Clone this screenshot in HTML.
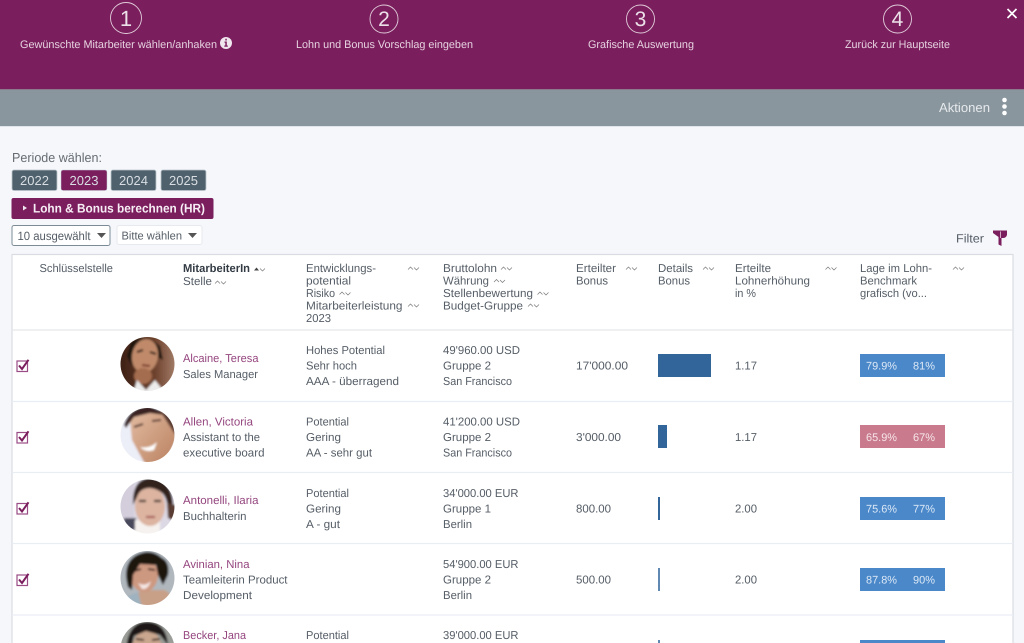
<!DOCTYPE html>
<html><head><meta charset="utf-8"><title>Lohn und Bonus</title>
<style>
html,body{margin:0;padding:0;background:#f5f7fb;width:1024px;height:643px;overflow:hidden}
svg{display:block;overflow:visible;filter:blur(.3px);font-family:"Liberation Sans",sans-serif}
text{font-size:11.5px;fill:#555d66;text-rendering:geometricPrecision}
.w{fill:#e6d3e0;font-size:11px}
.n{fill:#94457e}
.b{fill:#dce8f5;font-size:11px}
.s{fill:none;stroke:#777;stroke-width:.7}
.num{fill:#ece0e8;font-size:21px;text-anchor:middle}
.c{fill:none;stroke:#e0ccd9;stroke-width:.9}
.y{fill:#d8dee3;font-size:13px;text-anchor:middle}
.l{stroke:#e9eef5;stroke-width:1.2}
</style></head><body>
<svg width="1024" height="643" viewBox="0 0 1024 643" xmlns="http://www.w3.org/2000/svg">
<defs>
<filter id="bl" x="-20%" y="-20%" width="140%" height="140%"><feGaussianBlur stdDeviation="1.1"/></filter>
<clipPath id="cp1"><circle cx="147.5" cy="364" r="27"/></clipPath>
<clipPath id="cp2"><circle cx="147.5" cy="435" r="27"/></clipPath>
<clipPath id="cp3"><circle cx="147.5" cy="506.500" r="27"/></clipPath>
<clipPath id="cp4"><circle cx="147.5" cy="578" r="27"/></clipPath>
<clipPath id="cp5"><circle cx="147.5" cy="649" r="27"/></clipPath>
<linearGradient id="g1" x1="0" x2="1"><stop offset="0" stop-color="#3a1e14"/><stop offset=".6" stop-color="#6b3f2a"/><stop offset="1" stop-color="#a98470"/></linearGradient>
<linearGradient id="sk2" x1="0" x2="1" y1="0" y2="1"><stop offset="0" stop-color="#e3bca2"/><stop offset="1" stop-color="#b9805f"/></linearGradient>
<g id="ck"><rect x="1" y="2" width="10.500" height="10.500" fill="none" stroke="#9a4c85" stroke-width="1.200"/><path d="M3 6.500L6 10L12.500 .8" fill="none" stroke="#7b1e5e" stroke-width="2"/></g>
<g id="so"><path class="s" d="M0 3.500L2.500 1L5 3.500M6 1.500L8.500 4L11 1.500"/></g>
<path id="car" d="M0 0H9L4.500 5Z" fill="#555"/>
</defs>

<!-- header -->
<rect x="-5" y="-5" width="1034" height="94.500" fill="#7b1e5e"/>
<rect x="-5" y="89.500" width="1034" height="37" fill="#8a969e"/>
<rect x="-5" y="89" width="1034" height="1" fill="#8c7a8e"/>
<rect x="-5" y="126" width="1034" height="1" fill="#dfe5ea"/>
<rect x="-5" y="127" width="1034" height="525" fill="#f5f7fb"/>

<circle class="c" cx="126" cy="18" r="15.500"/><text class="num" x="126" y="26" style="font-size:22px">1</text>
<circle class="c" cx="384" cy="19" r="14"/><text class="num" x="384" y="26">2</text>
<circle class="c" cx="640.500" cy="19" r="14"/><text class="num" x="640.500" y="26">3</text>
<circle class="c" cx="897.500" cy="19" r="14"/><text class="num" x="897.500" y="26">4</text>

<text class="w" x="20" y="48" textLength="197" lengthAdjust="spacingAndGlyphs">Gewünschte Mitarbeiter wählen/anhaken</text>
<circle cx="226" cy="43" r="6" fill="#f0e6ee"/>
<path d="M224.500 41.500H226.800V45.500H227.800V46.800H224.300V45.500H225.300V42.700H224.500Z M225.300 38.800H226.800V40.500H225.300Z" fill="#7b1e5e"/>
<text class="w" x="296" y="48" textLength="177" lengthAdjust="spacingAndGlyphs">Lohn und Bonus Vorschlag eingeben</text>
<text class="w" x="588" y="48" textLength="106" lengthAdjust="spacingAndGlyphs">Grafische Auswertung</text>
<text class="w" x="845" y="48" textLength="105" lengthAdjust="spacingAndGlyphs">Zurück zur Hauptseite</text>
<path d="M1007.500 9L1016.500 18M1016.500 9L1007.500 18" stroke="#fff" stroke-width="1.700" fill="none"/>

<text x="939" y="112" textLength="51" lengthAdjust="spacingAndGlyphs" style="fill:#e6eaed;font-size:13px">Aktionen</text>
<circle cx="1004.500" cy="100" r="2.300" fill="#fff"/><circle cx="1004.500" cy="106.500" r="2.300" fill="#fff"/><circle cx="1004.500" cy="113" r="2.300" fill="#fff"/>

<!-- controls -->
<text x="12" y="162" textLength="90" lengthAdjust="spacingAndGlyphs" style="font-size:13px;fill:#666c72">Periode wählen:</text>
<rect x="12" y="170" width="45" height="20.500" rx="2" fill="#4f616c" stroke="#bcc5cd" stroke-width=".8"/>
<rect x="61" y="170" width="46" height="20.500" rx="2" fill="#7b1e5e" stroke="#c5ccd3" stroke-width=".5"/>
<rect x="111" y="170" width="45" height="20.500" rx="2" fill="#4f616c" stroke="#bcc5cd" stroke-width=".8"/>
<rect x="161" y="170" width="45" height="20.500" rx="2" fill="#4f616c" stroke="#bcc5cd" stroke-width=".8"/>
<text class="y" x="34.500" y="185">2022</text><text class="y" x="84" y="185">2023</text><text class="y" x="133.500" y="185">2024</text><text class="y" x="183.500" y="185">2025</text>

<rect x="11.500" y="198" width="202" height="21" rx="2" fill="#7b1e5e"/>
<path d="M23 205.500L27 208L23 210.500Z" fill="#f0e6ee"/>
<text x="33" y="212.500" textLength="172" lengthAdjust="spacingAndGlyphs" style="fill:#f6eef4;font-weight:bold;font-size:12.500px">Lohn &amp; Bonus berechnen (HR)</text>

<rect x="12" y="225.500" width="98" height="20" rx="2" fill="#fff" stroke="#7c8c97"/>
<text x="17.500" y="240" textLength="73" lengthAdjust="spacingAndGlyphs" style="font-size:12px">10 ausgewählt</text>
<use href="#car" x="97" y="233"/>
<rect x="117" y="225.500" width="85" height="19" rx="2" fill="#fff" stroke="#e6e9ee"/>
<text x="121.500" y="239.500" textLength="60.500" lengthAdjust="spacingAndGlyphs" style="font-size:11.500px">Bitte wählen</text>
<use href="#car" x="188" y="233"/>

<text x="956" y="242.500" textLength="28" lengthAdjust="spacingAndGlyphs" style="font-size:12px">Filter</text>
<path d="M993 230.500H1007V235Q1006 238 1003 238H1001.500V246L998.500 244.500V237L993 233Z" fill="#7b1e5e"/>
<path d="M1000.500 231.500V238" stroke="#e9cfe0" stroke-width=".8"/>

<!-- table -->
<rect x="12" y="254.500" width="1001" height="400" fill="#fff" stroke="#d9dde3" stroke-width="1.200"/>
<line class="l" x1="12" x2="1013" y1="330" y2="330" style="stroke:#e4e7eb"/>
<line class="l" x1="12" x2="1013" y1="401.500" y2="401.500"/>
<line class="l" x1="12" x2="1013" y1="472.500" y2="472.500"/>
<line class="l" x1="12" x2="1013" y1="543.500" y2="543.500"/>
<line class="l" x1="12" x2="1013" y1="615" y2="615"/>

<!-- table head -->
<text x="39.500" y="272" textLength="73.500" lengthAdjust="spacingAndGlyphs">Schlüsselstelle</text>
<text x="183" y="272" textLength="67" lengthAdjust="spacingAndGlyphs" style="font-weight:bold;fill:#333b44">MitarbeiterIn</text>
<path d="M254 270.500L256.500 267.500L259 270.500Z" fill="#444"/><path class="s" d="M260 268.500L262.500 271L265 268.500"/>
<text x="183" y="285" textLength="29" lengthAdjust="spacingAndGlyphs">Stelle</text><use href="#so" x="215" y="280"/>

<text x="306" y="272" textLength="70" lengthAdjust="spacingAndGlyphs">Entwicklungs-</text><use href="#so" x="408" y="266"/>
<text x="306" y="284.500" textLength="45" lengthAdjust="spacingAndGlyphs">potential</text>
<text x="306" y="297" textLength="29" lengthAdjust="spacingAndGlyphs">Risiko</text><use href="#so" x="339.500" y="291"/>
<text x="306" y="309.500" textLength="96.500" lengthAdjust="spacingAndGlyphs">Mitarbeiterleistung</text><use href="#so" x="408" y="303"/>
<text x="306" y="322" textLength="25" lengthAdjust="spacingAndGlyphs">2023</text>

<text x="443" y="272" textLength="54" lengthAdjust="spacingAndGlyphs">Bruttolohn</text><use href="#so" x="501" y="266"/>
<text x="443" y="284.500" textLength="46" lengthAdjust="spacingAndGlyphs">Währung</text><use href="#so" x="494" y="278.500"/>
<text x="443" y="297" textLength="90" lengthAdjust="spacingAndGlyphs">Stellenbewertung</text><use href="#so" x="537.500" y="291"/>
<text x="443" y="309.500" textLength="80" lengthAdjust="spacingAndGlyphs">Budget-Gruppe</text><use href="#so" x="528" y="303"/>

<text x="576" y="272" textLength="40" lengthAdjust="spacingAndGlyphs">Erteilter</text><use href="#so" x="626" y="266"/>
<text x="576" y="284.500" textLength="32" lengthAdjust="spacingAndGlyphs">Bonus</text>
<text x="658" y="272" textLength="35" lengthAdjust="spacingAndGlyphs">Details</text><use href="#so" x="703" y="266"/>
<text x="658" y="284.500" textLength="32" lengthAdjust="spacingAndGlyphs">Bonus</text>
<text x="735" y="272" textLength="36" lengthAdjust="spacingAndGlyphs">Erteilte</text><use href="#so" x="825.500" y="266"/>
<text x="735" y="284.500" textLength="75" lengthAdjust="spacingAndGlyphs">Lohnerhöhung</text>
<text x="735" y="297" textLength="21" lengthAdjust="spacingAndGlyphs">in %</text>
<text x="860" y="272" textLength="72" lengthAdjust="spacingAndGlyphs">Lage im Lohn-</text><use href="#so" x="953" y="266"/>
<text x="860" y="284.500" textLength="57" lengthAdjust="spacingAndGlyphs">Benchmark</text>
<text x="860" y="297" textLength="67" lengthAdjust="spacingAndGlyphs">grafisch (vo...</text>

<!-- checks -->
<use href="#ck" x="16" y="359"/><use href="#ck" x="16" y="430.500"/><use href="#ck" x="16" y="501.500"/><use href="#ck" x="16" y="573"/>

<!-- face 1 -->
<g clip-path="url(#cp1)"><g filter="url(#bl)">
<rect x="118" y="335" width="60" height="60" fill="url(#g1)"/>
<path d="M131 342Q146 333 160 346L163 360L155 356L152 348L136 350L132 366L127 356Z" fill="#1e1210"/>
<ellipse cx="145" cy="356" rx="13" ry="17" fill="#c08a6a" transform="rotate(10 145 356)"/>
<ellipse cx="143" cy="376" rx="9" ry="8" fill="#a56d50"/>
<path d="M133 394L137 380L146 390L155 380L166 394Z" fill="#ececec"/>
<path d="M137 352L143 350M150 352L156 354" stroke="#2a1610" stroke-width="2"/>
<path d="M142 365L150 366" stroke="#7a3528" stroke-width="2"/>
</g></g>
<!-- face 2 -->
<g clip-path="url(#cp2)"><g filter="url(#bl)">
<rect x="118" y="406" width="60" height="60" fill="#eceef8"/>
<path d="M130 420L136 410H172L176 440L165 464H145L132 440Z" fill="url(#sk2)"/>
<path d="M124 425Q130 406 150 406L172 416L150 413L134 417L126 428Z" fill="#3a2220"/>
<path d="M160 411L176 420V436L169 425Z" fill="#5a3a30"/>
<path d="M134 427L143 424M152 421L161 420" stroke="#5a3c34" stroke-width="2"/>
<path d="M140 447Q150 449 157 442L154 450Q146 453 140 447Z" fill="#fff"/>
</g></g>
<!-- face 3 -->
<g clip-path="url(#cp3)"><g filter="url(#bl)">
<rect x="118" y="478" width="60" height="60" fill="#dcd8e4"/>
<rect x="118" y="478" width="16" height="60" fill="#d4cedc"/>
<rect x="124" y="518" width="12" height="12" fill="#4a4a5c"/>
<path d="M135 536V520H160V536Z" fill="#f6f2ef"/>
<ellipse cx="150" cy="506" rx="15" ry="20" fill="#dcb4a0"/>
<path d="M133 505Q132 479 150 478Q172 479 173 505L167 503Q165 490 150 488Q140 488 137 497Z" fill="#33231f"/>
<path d="M167 503L176 505V522L168 518Z" fill="#5a3c30"/>
<path d="M139 501L146 501M154 501L161 501" stroke="#4a3832" stroke-width="2.200"/>
<path d="M146 517H155" stroke="#a8605c" stroke-width="2.200"/>
</g></g>
<!-- face 4 -->
<g clip-path="url(#cp4)"><g filter="url(#bl)">
<rect x="118" y="549" width="60" height="60" fill="#b0b8be"/>
<path d="M128 608Q135 590 147 590L165 590Q172 594 178 608Z" fill="#c8a088"/>
<path d="M118 600L138 592L142 608H118Z" fill="#9fb2bf"/>
<ellipse cx="144" cy="575" rx="14" ry="17" fill="#cd9880"/>
<path d="M128 587Q122 565 135 556Q150 547 162 558Q170 562 168 575L163 585L158 575L156 565L140 564L133 575L132 590Z" fill="#1a1210"/>
<path d="M134 571L141 569M148 569L155 570" stroke="#2a1a14" stroke-width="1.800"/>
<path d="M138 583Q145 587 151 581Q148 590 142 589Z" fill="#f4e6e4"/>
</g></g>
<!-- face 5 -->
<g clip-path="url(#cp5)"><g filter="url(#bl)">
<rect x="118" y="620" width="60" height="27" fill="#9a9c98"/>
<ellipse cx="147" cy="650" rx="15" ry="20" fill="#c9a68e"/>
<path d="M126 650Q128 622 147 622Q166 622 168 645L160 635L146 631L134 636L131 650Z" fill="#1e1614"/>
<path d="M136 639L144 640M152 640L160 639" stroke="#2a1a14" stroke-width="1.800"/>
</g></g>

<!-- row 1 -->
<text class="n" x="183" y="362" textLength="75.500" lengthAdjust="spacingAndGlyphs">Alcaine, Teresa</text>
<text x="183" y="378" textLength="75" lengthAdjust="spacingAndGlyphs">Sales Manager</text>
<text x="306" y="354" textLength="79" lengthAdjust="spacingAndGlyphs">Hohes Potential</text>
<text x="306" y="369.500" textLength="51" lengthAdjust="spacingAndGlyphs">Sehr hoch</text>
<text x="306" y="385" textLength="93" lengthAdjust="spacingAndGlyphs">AAA - überragend</text>
<text x="443" y="354" textLength="77" lengthAdjust="spacingAndGlyphs">49'960.00 USD</text>
<text x="443" y="369.500" textLength="48" lengthAdjust="spacingAndGlyphs">Gruppe 2</text>
<text x="443" y="385" textLength="69" lengthAdjust="spacingAndGlyphs">San Francisco</text>
<text x="576" y="369.500" textLength="52" lengthAdjust="spacingAndGlyphs">17'000.00</text>
<rect x="658" y="354" width="53" height="23" fill="#32669a"/>
<text x="735" y="369.500" textLength="22" lengthAdjust="spacingAndGlyphs">1.17</text>
<rect x="860" y="354" width="85" height="23" fill="#4a88ca"/>
<text class="b" x="866" y="369.500" textLength="31" lengthAdjust="spacingAndGlyphs">79.9%</text>
<text class="b" x="913" y="369.500" textLength="22" lengthAdjust="spacingAndGlyphs">81%</text>

<!-- row 2 -->
<text class="n" x="183" y="425.500" textLength="70" lengthAdjust="spacingAndGlyphs">Allen, Victoria</text>
<text x="183" y="441" textLength="77" lengthAdjust="spacingAndGlyphs">Assistant to the</text>
<text x="183" y="456.500" textLength="81.500" lengthAdjust="spacingAndGlyphs">executive board</text>
<text x="306" y="425.500" textLength="43" lengthAdjust="spacingAndGlyphs">Potential</text>
<text x="306" y="441" textLength="35" lengthAdjust="spacingAndGlyphs">Gering</text>
<text x="306" y="456.500" textLength="66" lengthAdjust="spacingAndGlyphs">AA - sehr gut</text>
<text x="443" y="425.500" textLength="77" lengthAdjust="spacingAndGlyphs">41'200.00 USD</text>
<text x="443" y="441" textLength="48" lengthAdjust="spacingAndGlyphs">Gruppe 2</text>
<text x="443" y="456.500" textLength="69" lengthAdjust="spacingAndGlyphs">San Francisco</text>
<text x="576" y="441" textLength="45" lengthAdjust="spacingAndGlyphs">3'000.00</text>
<rect x="658" y="425" width="9" height="23" fill="#32669a"/>
<text x="735" y="441" textLength="22" lengthAdjust="spacingAndGlyphs">1.17</text>
<rect x="860" y="425" width="85" height="23" fill="#c97a8c"/>
<text class="b" x="866" y="441" textLength="31" lengthAdjust="spacingAndGlyphs" style="fill:#f6e6ea">65.9%</text>
<text class="b" x="913" y="441" textLength="22" lengthAdjust="spacingAndGlyphs" style="fill:#f6e6ea">67%</text>

<!-- row 3 -->
<text class="n" x="183" y="504" textLength="75.500" lengthAdjust="spacingAndGlyphs">Antonelli, Ilaria</text>
<text x="183" y="520" textLength="63.500" lengthAdjust="spacingAndGlyphs">Buchhalterin</text>
<text x="306" y="497" textLength="43" lengthAdjust="spacingAndGlyphs">Potential</text>
<text x="306" y="512.500" textLength="35" lengthAdjust="spacingAndGlyphs">Gering</text>
<text x="306" y="528" textLength="34" lengthAdjust="spacingAndGlyphs">A - gut</text>
<text x="443" y="497" textLength="75.500" lengthAdjust="spacingAndGlyphs">34'000.00 EUR</text>
<text x="443" y="512.500" textLength="48" lengthAdjust="spacingAndGlyphs">Gruppe 1</text>
<text x="443" y="528" textLength="29" lengthAdjust="spacingAndGlyphs">Berlin</text>
<text x="576" y="512.500" textLength="35" lengthAdjust="spacingAndGlyphs">800.00</text>
<rect x="658" y="497" width="2" height="23" fill="#32669a"/>
<text x="735" y="512.500" textLength="22" lengthAdjust="spacingAndGlyphs">2.00</text>
<rect x="860" y="497" width="85" height="23" fill="#4a88ca"/>
<text class="b" x="866" y="512.500" textLength="31" lengthAdjust="spacingAndGlyphs">75.6%</text>
<text class="b" x="913" y="512.500" textLength="22" lengthAdjust="spacingAndGlyphs">77%</text>

<!-- row 4 -->
<text class="n" x="183" y="568" textLength="66.500" lengthAdjust="spacingAndGlyphs">Avinian, Nina</text>
<text x="183" y="583.500" textLength="104.500" lengthAdjust="spacingAndGlyphs">Teamleiterin Product</text>
<text x="183" y="599" textLength="69" lengthAdjust="spacingAndGlyphs">Development</text>
<text x="443" y="568" textLength="75.500" lengthAdjust="spacingAndGlyphs">54'900.00 EUR</text>
<text x="443" y="583.500" textLength="48" lengthAdjust="spacingAndGlyphs">Gruppe 2</text>
<text x="443" y="599" textLength="29" lengthAdjust="spacingAndGlyphs">Berlin</text>
<text x="576" y="583.500" textLength="35" lengthAdjust="spacingAndGlyphs">500.00</text>
<rect x="658" y="568" width="2" height="23" fill="#5f88b2"/>
<text x="735" y="583.500" textLength="22" lengthAdjust="spacingAndGlyphs">2.00</text>
<rect x="860" y="568" width="85" height="23" fill="#4a88ca"/>
<text class="b" x="866" y="583.500" textLength="31" lengthAdjust="spacingAndGlyphs">87.8%</text>
<text class="b" x="913" y="583.500" textLength="22" lengthAdjust="spacingAndGlyphs">90%</text>

<!-- row 5 -->
<text class="n" x="183" y="639" textLength="63" lengthAdjust="spacingAndGlyphs">Becker, Jana</text>
<text x="306" y="639" textLength="43" lengthAdjust="spacingAndGlyphs">Potential</text>
<text x="443" y="639" textLength="75.500" lengthAdjust="spacingAndGlyphs">39'000.00 EUR</text>
<rect x="658" y="640" width="2" height="8" fill="#5f88b2"/>
<rect x="860" y="640" width="85" height="8" fill="#4a88ca"/>
</svg>
</body></html>
